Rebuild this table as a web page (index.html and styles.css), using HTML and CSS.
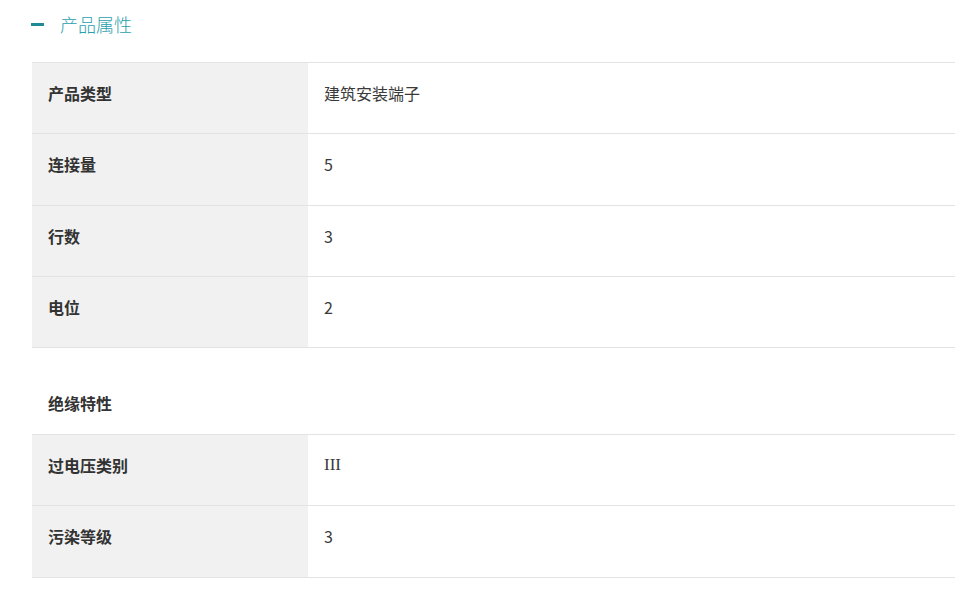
FILE: index.html
```html
<!DOCTYPE html>
<html lang="zh">
<head>
<meta charset="utf-8">
<link rel="stylesheet" href="styles.css">
</head>
<body>
<div class="page">
  <div class="title">
    <span class="minus"></span>
    <span class="title-text">产品属性</span>
  </div>
  <div class="table">
    <div class="row"><div class="label">产品类型</div><div class="value">建筑安装端子</div></div>
    <div class="row"><div class="label">连接量</div><div class="value">5</div></div>
    <div class="row"><div class="label">行数</div><div class="value">3</div></div>
    <div class="row"><div class="label">电位</div><div class="value">2</div></div>
    <div class="section">绝缘特性</div>
    <div class="row"><div class="label">过电压类别</div><div class="value roman">III</div></div>
    <div class="row"><div class="label">污染等级</div><div class="value">3</div></div>
  </div>
</div>
</body>
</html>
```

FILE: styles.css
```css
html, body {
  margin: 0;
  padding: 0;
  background: #ffffff;
}
body {
  font-family: "Noto Sans CJK SC", "Noto Sans", sans-serif;
  color: #333333;
}
.page {
  padding: 12px 12px 0 32px;
}
.title {
  display: flex;
  align-items: center;
  height: 24px;
  gap: 16px;
}
.minus {
  display: block;
  width: 13px;
  height: 3px;
  background: #1d8a96;
  margin-left: -1px;
  margin-top: 1px;
}
.title-text {
  font-size: 18px;
  line-height: 24px;
  color: #2aa0ae;
  font-weight: 300;
}
.table {
  margin-top: 26px;
  border-top: 1px solid #e3e3e6;
}
.row {
  display: grid;
  grid-template-columns: 276px 1fr;
  border-bottom: 1px solid #e3e3e6;
}
.label,
.value {
  font-size: 16px;
  line-height: 24px;
  padding: 18px 16px 28.25px 16px;
}
.label {
  background: #f1f1f1;
  font-weight: 700;
  color: #333333;
}
.value {
  font-size: 16px;
  color: #3a3a3a;
}
.roman {
  font-family: "Liberation Serif", serif;
  font-size: 17px;
}
.section {
  font-size: 16px;
  line-height: 24px;
  font-weight: 700;
  padding: 43px 16px 19px 16px;
  border-bottom: 1px solid #e3e3e6;
}
```
